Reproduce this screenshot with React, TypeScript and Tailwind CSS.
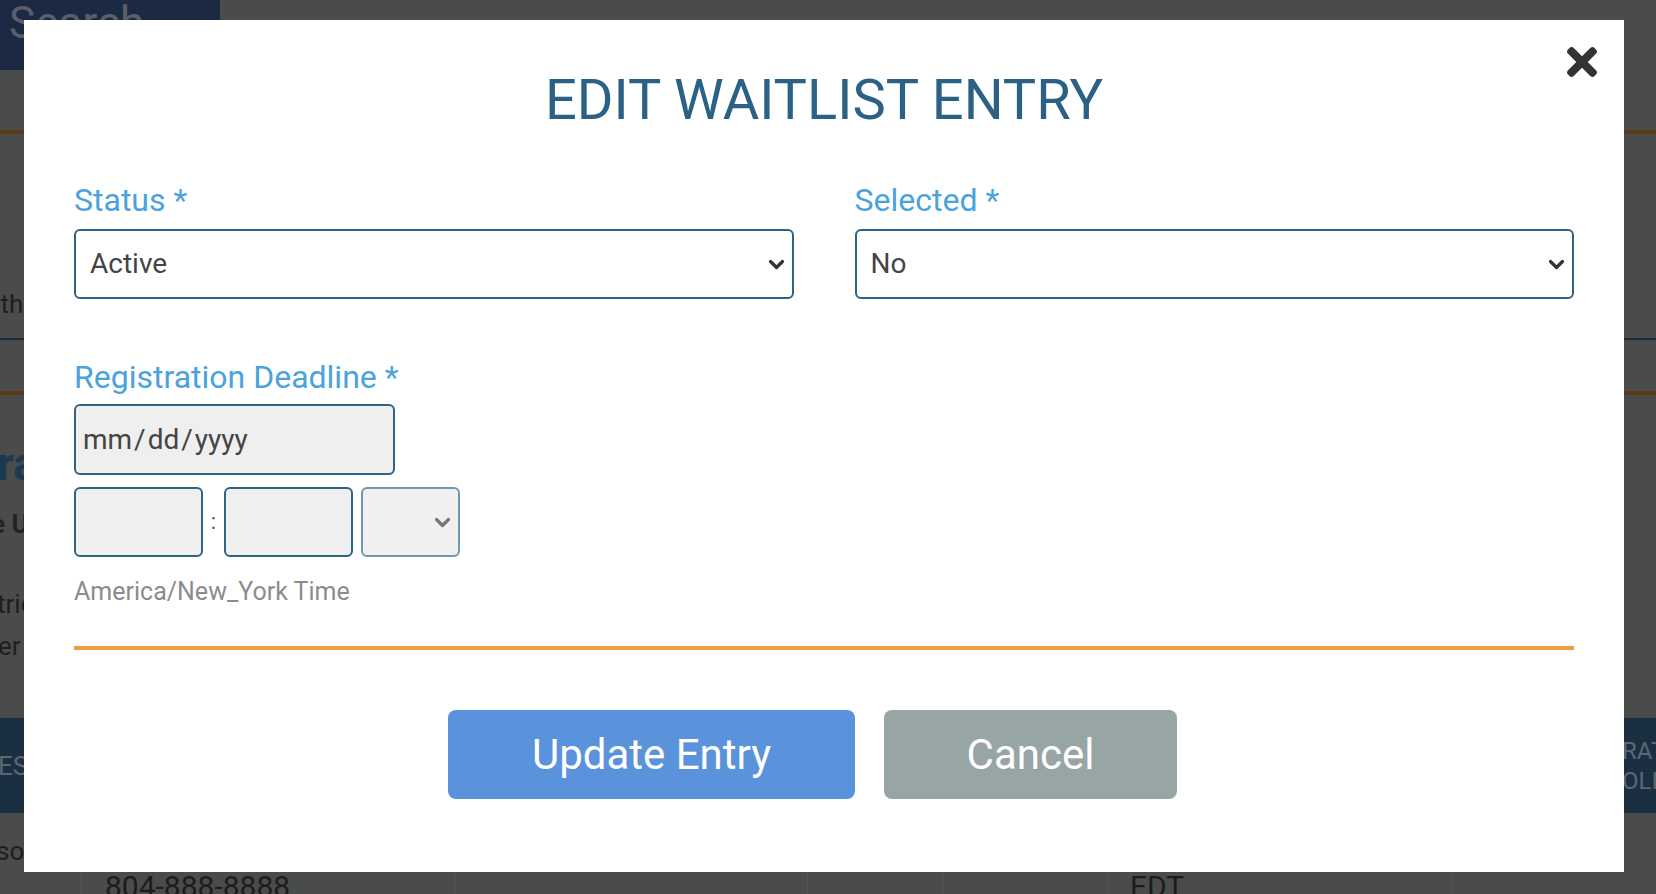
import React from "react";

function Chevron({ className }: { className: string }) {
  return (
    <svg viewBox="0 0 17 11" className={className} fill="none">
      <path
        d="M2.5 2.5 L8.5 8.5 L14.5 2.5"
        stroke="currentColor"
        strokeWidth="3.2"
        strokeLinecap="round"
        strokeLinejoin="round"
      />
    </svg>
  );
}

function CloseIcon() {
  return (
    <svg viewBox="0 80 352 352" className="w-[30px] h-[30px] text-[#333]" fill="currentColor">
      <path d="M242.72 256l100.07-100.07c12.28-12.28 12.28-32.19 0-44.48l-22.24-22.24c-12.28-12.28-32.19-12.28-44.48 0L176 189.28 75.93 89.21c-12.28-12.28-32.19-12.28-44.48 0L9.21 111.45c-12.28 12.28-12.28 32.19 0 44.48L109.28 256 9.21 356.07c-12.28 12.28-12.28 32.19 0 44.48l22.24 22.24c12.28 12.28 32.2 12.28 44.48 0L176 322.72l100.07 100.07c12.28 12.28 32.2 12.28 44.48 0l22.24-22.24c12.28-12.28 12.28-32.19 0-44.48L242.72 256z" />
    </svg>
  );
}

function SelectBox({ value }: { value: string }) {
  return (
    <div className="h-[70px] rounded-[6px] border-2 border-[#2e6384] bg-white flex items-center justify-between pl-[14px] pr-[7px] text-[28px] leading-none text-[#444]">
      <span>{value}</span>
      <Chevron className="w-[17px] h-[11px] text-[#333]" />
    </div>
  );
}

function Label({ children }: { children: React.ReactNode }) {
  return <div className="text-[32px] leading-none text-[#4aa3dc]">{children}</div>;
}

function Background() {
  return (
    <div className="flex flex-col w-full h-full">
      <div className="h-[70px] shrink-0 flex">
        <div className="w-[220px] h-full bg-[#1b2a42] pl-[9px] pt-[1px] text-[44px] leading-none text-[#5a5f67]">
          Search
        </div>
      </div>
      <div className="h-[60px] shrink-0" />
      <div className="h-[4px] shrink-0 bg-[#5c3a17]" />
      <div className="h-[147px] shrink-0" />
      <div className="h-[57px] shrink-0 text-[26px] leading-none text-[#1e1e1e] pt-[10px] -ml-[30px]">Path</div>
      <div className="h-[2px] shrink-0 bg-[#1b2a42]" />
      <div className="h-[51px] shrink-0" />
      <div className="h-[4px] shrink-0 bg-[#5c3a17]" />
      <div className="h-[323px] shrink-0 flex flex-col">
        <div className="mt-[46px] text-[46px] leading-none font-bold text-[#1b3a52] -ml-[3px]">ra</div>
        <div className="mt-[24px] text-[26px] leading-none font-bold text-[#222] -ml-[9px]">e U</div>
        <div className="mt-[54px] text-[26px] leading-none text-[#1e1e1e] -ml-[3px]">tric</div>
        <div className="mt-[16px] text-[26px] leading-none text-[#1e1e1e] -ml-[2px]">er</div>
      </div>
      <div className="h-[95px] shrink-0 bg-[#1a3042] flex items-center justify-between text-[#5b6873]">
        <div className="text-[26px] leading-none -ml-[2px]">ESC</div>
        <div className="text-[24px] leading-[30px] w-[40px] -mr-[6px]">
          <div>RAT</div>
          <div>OLI</div>
        </div>
      </div>
      <div className="h-[59px] shrink-0 flex items-end pb-[8px]">
        <div className="text-[26px] leading-none text-[#1e1e1e] -ml-[4px]">so</div>
      </div>
      <div className="flex-1 min-h-0 overflow-hidden flex text-[30px] leading-none text-[#1c1c1c]">
        <div className="w-[82px] border-r border-[#555]" />
        <div className="w-[373px] border-r border-[#555] pl-[23px]">804-888-8888</div>
        <div className="w-[353px] border-r border-[#555]" />
        <div className="w-[135px] border-r border-[#555]" />
        <div className="w-[165px] border-r border-[#555]" />
        <div className="w-[345px] border-r border-[#555] pl-[22px]">EDT</div>
      </div>
    </div>
  );
}

export default function App() {
  return (
    <div className="relative w-[1656px] h-[894px] overflow-hidden bg-[#4a4b4b] font-[Roboto,Arial,sans-serif]">
      <Background />
      <div className="absolute left-[24px] top-[20px] w-[1600px] h-[852px] bg-white px-[50px] pt-[52px]">
        <button className="absolute top-[27px] right-[27px]">
          <CloseIcon />
        </button>
        <h1 className="text-center text-[56px] leading-none text-[#2b6185]">EDIT WAITLIST ENTRY</h1>

        <div className="mt-[56px] grid grid-cols-2 gap-x-[61px]">
          <div>
            <Label>Status *</Label>
            <div className="mt-[13px]">
              <SelectBox value="Active" />
            </div>
          </div>
          <div>
            <Label>Selected *</Label>
            <div className="mt-[13px]">
              <SelectBox value="No" />
            </div>
          </div>
        </div>

        <div className="mt-[62px]">
          <Label>Registration Deadline *</Label>
        </div>
        <div className="mt-[11px] w-[321px] h-[71px] rounded-[6px] border-2 border-[#2e6384] bg-[#efefef] flex items-center pl-[7px] text-[28px] leading-none text-[#444]">
          <span>mm</span>
          <span className="mx-[2px]">/</span>
          <span>dd</span>
          <span className="mx-[2px]">/</span>
          <span>yyyy</span>
        </div>
        <div className="mt-[12px] flex items-center h-[70px]">
          <div className="w-[129px] h-full rounded-[6px] border-2 border-[#2e6384] bg-[#efefef]" />
          <div className="w-[21px] text-center text-[22px] leading-none text-[#555]">:</div>
          <div className="w-[129px] h-full rounded-[6px] border-2 border-[#2e6384] bg-[#efefef]" />
          <div className="ml-[8px] w-[99px] h-full rounded-[6px] border-2 border-[#7097b2] bg-[#f0f0f0] flex items-center justify-end pr-[7px]">
            <Chevron className="w-[17px] h-[11px] text-[#777]" />
          </div>
        </div>
        <div className="mt-[22px] text-[25px] leading-none text-[#8c8c8c]">America/New_York Time</div>

        <div className="mt-[42px] h-[4px] bg-[#f19b3f]" />

        <div className="mt-[60px] flex justify-center gap-[29px] pr-[23px]">
          <button className="w-[407px] h-[89px] rounded-[8px] bg-[#5b92dc] text-white text-[42px] leading-none">
            Update Entry
          </button>
          <button className="w-[293px] h-[89px] rounded-[8px] bg-[#98a5a5] text-white text-[42px] leading-none">
            Cancel
          </button>
        </div>
      </div>
    </div>
  );
}
